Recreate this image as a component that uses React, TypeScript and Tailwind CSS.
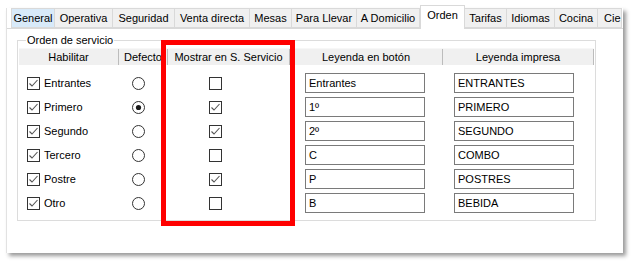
import React from 'react';

const tabs = [
  { label: 'General', w: 'w-[44px]', hover: true },
  { label: 'Operativa', w: 'w-[58px]' },
  { label: 'Seguridad', w: 'w-[62px]' },
  { label: 'Venta directa', w: 'w-[75px]' },
  { label: 'Mesas', w: 'w-[42px]' },
  { label: 'Para Llevar', w: 'w-[65px]' },
  { label: 'A Domicilio', w: 'w-[63px]' },
  { label: 'Orden', w: 'w-[45px]', active: true },
  { label: 'Tarifas', w: 'w-[42px]' },
  { label: 'Idiomas', w: 'w-[48px]' },
  { label: 'Cocina', w: 'w-[43px]' },
  { label: 'Cierre', w: 'w-[24px]', cut: true },
];

const rows = [
  { name: 'Entrantes', def: false, show: false, boton: 'Entrantes', impresa: 'ENTRANTES' },
  { name: 'Primero', def: true, show: true, boton: '1º', impresa: 'PRIMERO' },
  { name: 'Segundo', def: false, show: true, boton: '2º', impresa: 'SEGUNDO' },
  { name: 'Tercero', def: false, show: false, boton: 'C', impresa: 'COMBO' },
  { name: 'Postre', def: false, show: true, boton: 'P', impresa: 'POSTRES' },
  { name: 'Otro', def: false, show: false, boton: 'B', impresa: 'BEBIDA' },
];

const CheckBox = ({ checked }: { checked: boolean }) => (
  <svg width="13" height="13" viewBox="0 0 13 13" className="shrink-0">
    <rect x="0.5" y="0.5" width="12" height="12" fill="white" stroke="#333333" />
    {checked && (
      <polyline points="2.5,6.5 5,9 10.5,3" fill="none" stroke="#555555" strokeWidth="1.1" />
    )}
  </svg>
);

const Radio = ({ checked }: { checked: boolean }) => (
  <svg width="13" height="13" viewBox="0 0 13 13" className="shrink-0">
    <circle cx="6.5" cy="6.5" r="6" fill="white" stroke="#333333" />
    {checked && <circle cx="6.5" cy="6.5" r="2.6" fill="#1a1a1a" />}
  </svg>
);

const headers = [
  { label: 'Habilitar', w: 'w-[100px]' },
  { label: 'Defecto', w: 'w-[49px]' },
  { label: 'Mostrar en S. Servicio', w: 'w-[122px]' },
  { label: 'Leyenda en botón', w: 'w-[153px]' },
  { label: 'Leyenda impresa', w: 'w-[151px]' },
];

export default function App() {
  return (
    <div className="relative w-[631px] h-[262px] bg-white text-[11px] leading-[13px] text-black font-['Liberation_Sans',Arial,sans-serif] overflow-hidden">
      <div className="ml-[6px] mt-[8px] w-[617px] h-[245px] bg-white border-l border-[#e2e2e2] shadow-[3px_3px_4px_rgba(0,0,0,0.4)] flex flex-col">
        {/* tab strip */}
        <div className="flex items-end h-[20px] pl-[4px]">
          {tabs.map((t) => (
            <div
              key={t.label}
              className={
                t.active
                  ? `${t.w} h-[24px] -mb-px relative z-10 bg-white border border-b-0 border-[#d9d9d9] flex justify-center pt-[3px]`
                  : t.cut
                  ? `${t.w} h-[20px] bg-[#f0f0f0] border border-l-0 border-[#d9d9d9] pl-[6px] pt-[3px] overflow-hidden whitespace-nowrap`
                  : `${t.w} h-[20px] ${t.hover ? 'bg-[#d8eaf9] border-l' : 'bg-[#f0f0f0] border-l-0'} border border-[#d9d9d9] flex justify-center pt-[3px] whitespace-nowrap`
              }
            >
              {t.cut ? 'Cie' : t.label}
            </div>
          ))}
        </div>

        {/* tab page */}
        <div className="flex-1 border-t border-[#d9d9d9] pl-[10px] pt-[5px]">
          <fieldset className="w-[579px] border border-[#dcdcdc] px-px pt-px pb-[5px]">
            <legend className="ml-[7px] px-px leading-[13px]">Orden de servicio</legend>
            <div className="flex h-[17px] bg-[#f0f0f0] border-t border-[#f7f7f7]">
              {headers.map((h) => (
                <div
                  key={h.label}
                  className={`${h.w} shrink-0 flex items-center justify-center border-r border-[#bcbcbc] whitespace-nowrap overflow-hidden`}
                >
                  {h.label}
                </div>
              ))}
            </div>
            <div className="mt-[6px] flex flex-col">
              {rows.map((r) => (
                <div key={r.name} className="flex h-[24px] items-center">
                  <div className="w-[100px] shrink-0 pl-[8px] flex items-center gap-[4px]">
                    <CheckBox checked />
                    <span>{r.name}</span>
                  </div>
                  <div className="w-[49px] shrink-0 pl-[13px] flex items-center">
                    <Radio checked={r.def} />
                  </div>
                  <div className="w-[122px] shrink-0 pl-[41px] flex items-center">
                    <CheckBox checked={r.show} />
                  </div>
                  <div className="w-[153px] shrink-0 pl-[15px]">
                    <div className="w-[120px] h-[20px] border border-[#7a7a7a] bg-white pl-[3px] flex items-center">
                      {r.boton}
                    </div>
                  </div>
                  <div className="w-[151px] shrink-0 pl-[11px]">
                    <div className="w-[120px] h-[20px] border border-[#7a7a7a] bg-white pl-[3px] flex items-center">
                      {r.impresa}
                    </div>
                  </div>
                </div>
              ))}
            </div>
          </fieldset>
        </div>
      </div>

      {/* highlight annotation */}
      <div className="absolute left-[161px] top-[40px] w-[134px] h-[186px] border-[5px] border-[#ff0000] pointer-events-none" />
    </div>
  );
}
